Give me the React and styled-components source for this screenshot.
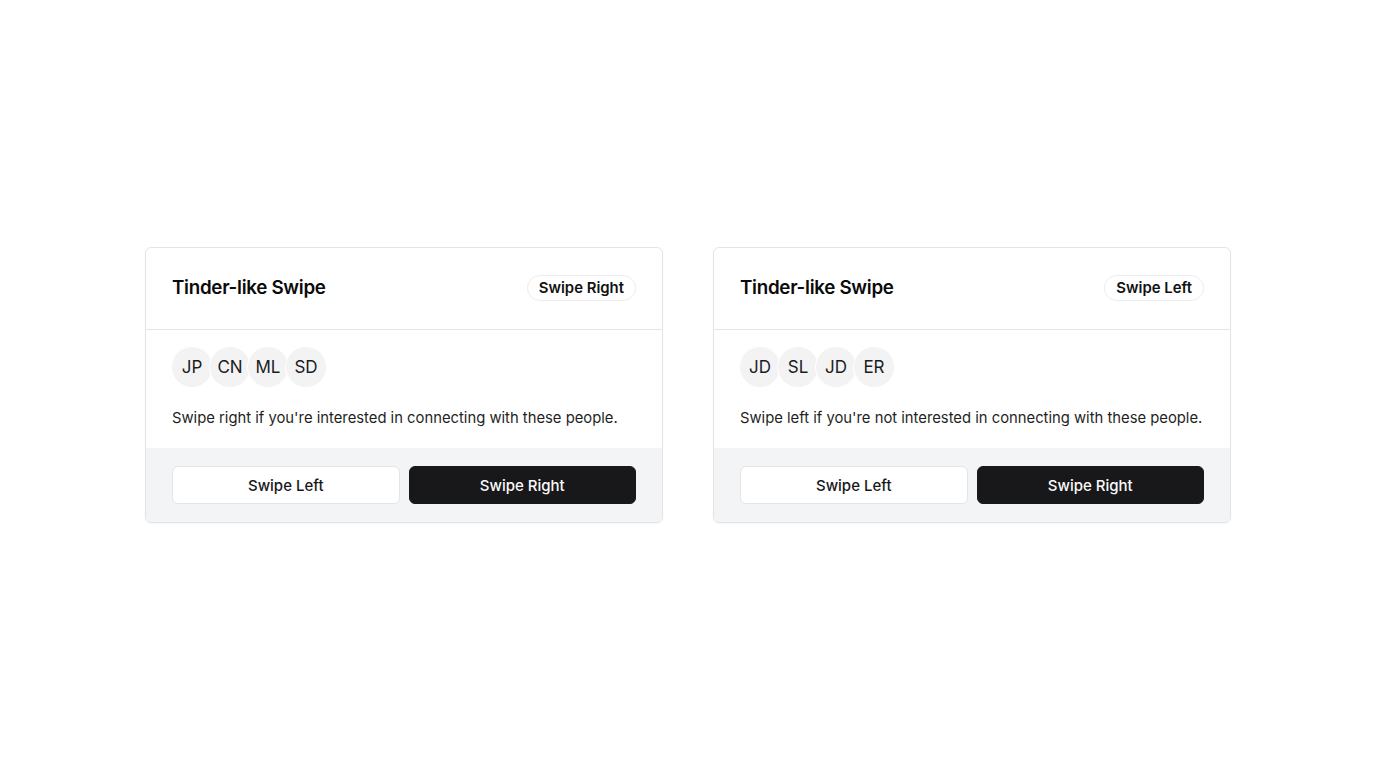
import React from 'react';
import styled, { createGlobalStyle } from 'styled-components';

const GlobalStyle = createGlobalStyle`
  html, body {
    margin: 0;
    padding: 0;
    background: #ffffff;
  }
  body {
    font-family: Inter, 'Noto Sans', sans-serif;
    color: #18181b;
  }
`;

const Page = styled.main`
  min-height: 100vh;
  box-sizing: border-box;
  padding-top: 2px;
  display: flex;
  align-items: center;
  justify-content: center;
  gap: 50px;
`;

const Card = styled.section`
  width: 518px;
  box-sizing: border-box;
  border: 1px solid #e4e4e7;
  border-radius: 6px;
  background: #ffffff;
  overflow: hidden;
  box-shadow: 0 1px 2px rgba(0, 0, 0, 0.04);
`;

const Header = styled.header`
  display: flex;
  align-items: center;
  justify-content: space-between;
  padding: 27px 26px 28px;
  border-bottom: 1px solid #e4e4e7;
  h2 {
    margin: 0;
    font-size: 18.8px;
    font-weight: 600;
    letter-spacing: -0.3px;
    color: #0a0a0a;
    line-height: 26px;
  }
`;

const Badge = styled.span`
  display: inline-flex;
  align-items: center;
  box-sizing: border-box;
  height: 26px;
  padding: 0 11px;
  border: 1px solid #ececee;
  border-radius: 999px;
  font-size: 14.9px;
  font-weight: 600;
  color: #111111;
`;

const Body = styled.div`
  padding: 17px 26px 18px;
  display: flex;
  flex-direction: column;
  gap: 19px;
  p {
    margin: 0;
    font-size: 14.8px;
    line-height: 24px;
    white-space: nowrap;
    color: #1f1f23;
  }
`;

const AvatarRow = styled.div`
  display: flex;
`;

const Avatar = styled.span`
  width: 40px;
  height: 40px;
  border-radius: 50%;
  background: #f3f3f4;
  box-shadow: 0 0 0 1px #ffffff;
  display: flex;
  align-items: center;
  justify-content: center;
  font-size: 17px;
  color: #1c1c1f;
  & + & {
    margin-left: -2px;
  }
`;

const Footer = styled.footer`
  display: grid;
  grid-template-columns: 1fr 1fr;
  gap: 9px;
  padding: 18px 26px;
  background: #f3f4f6;
`;

const Button = styled.button`
  height: 38px;
  border-radius: 6px;
  font-family: Inter, 'Noto Sans', sans-serif;
  font-size: 15px;
  font-weight: 500;
  cursor: pointer;
  border: 1px solid ${p => (p.$primary ? '#18181b' : '#e4e4e7')};
  background: ${p => (p.$primary ? '#18181b' : '#ffffff')};
  color: ${p => (p.$primary ? '#fafafa' : '#18181b')};
`;

const cards = [
  {
    badge: 'Swipe Right',
    people: ['JP', 'CN', 'ML', 'SD'],
    text: "Swipe right if you're interested in connecting with these people.",
  },
  {
    badge: 'Swipe Left',
    people: ['JD', 'SL', 'JD', 'ER'],
    text: "Swipe left if you're not interested in connecting with these people.",
  },
];

function SwipeCard({ badge, people, text }) {
  return (
    <Card>
      <Header>
        <h2>Tinder-like Swipe</h2>
        <Badge>{badge}</Badge>
      </Header>
      <Body>
        <AvatarRow>
          {people.map((p, i) => (
            <Avatar key={i}>{p}</Avatar>
          ))}
        </AvatarRow>
        <p>{text}</p>
      </Body>
      <Footer>
        <Button>Swipe Left</Button>
        <Button $primary>Swipe Right</Button>
      </Footer>
    </Card>
  );
}

export default function App() {
  return (
    <>
      <GlobalStyle />
      <Page>
        {cards.map((c, i) => (
          <SwipeCard key={i} {...c} />
        ))}
      </Page>
    </>
  );
}
